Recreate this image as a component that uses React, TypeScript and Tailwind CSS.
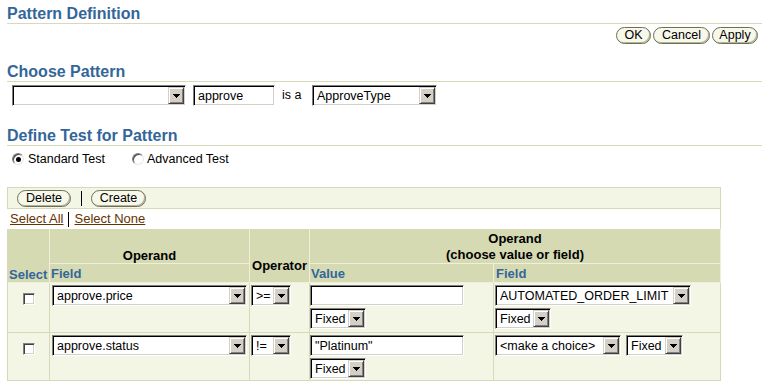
import React from 'react'

const olive = 'border-[#d6dab9]'

function Arrow() {
  return (
    <span className="flex h-[17px] w-[16px] shrink-0 items-center justify-center border border-t-[#d4d0c8] border-l-[#d4d0c8] border-b-[#404040] border-r-[#404040] bg-[#d4d0c8] shadow-[inset_1px_1px_0_#fff,inset_-1px_-1px_0_#808080]">
      <svg width="7" height="4" viewBox="0 0 7 4" shapeRendering="crispEdges">
        <path d="M0 0h7v1H6v1H5v1H4v1H3V3H2V2H1V1H0z" fill="#000" />
      </svg>
    </span>
  )
}

function Sel({ text, className = '' }: { text: string; className?: string }) {
  return (
    <div
      className={`flex h-[21px] shrink-0 border border-t-[#808080] border-l-[#808080] border-b-white border-r-white bg-white p-[1px] shadow-[inset_1px_1px_0_#000,inset_-1px_-1px_0_#d4d0c8] ${className}`}
    >
      <span className="min-w-0 flex-1 overflow-hidden whitespace-nowrap pl-[3px] pt-[1px] text-[12.5px] leading-[16px] text-black">
        {text}
      </span>
      <Arrow />
    </div>
  )
}

function Field({ text, className = '' }: { text: string; className?: string }) {
  return (
    <div
      className={`h-[21px] shrink-0 overflow-hidden whitespace-nowrap border border-t-[#808080] border-l-[#808080] border-b-white border-r-white bg-white pl-[4px] pt-[2px] text-[12.5px] leading-[16px] text-black shadow-[inset_1px_1px_0_#000,inset_-1px_-1px_0_#d4d0c8] ${className}`}
    >
      {text}
    </div>
  )
}

function Pill({ children, className = '' }: { children: React.ReactNode; className?: string }) {
  return (
    <span
      className={`inline-flex h-[17px] items-center justify-center rounded-full border border-[#6e6e58] bg-[#f7f7ea] text-[12.5px] leading-none text-black shadow-[inset_-1px_-1px_0_#b4b49a] ${className}`}
    >
      {children}
    </span>
  )
}

function Radio({ checked }: { checked?: boolean }) {
  return (
    <span className="flex h-[12px] w-[12px] shrink-0 items-center justify-center rounded-full border border-t-[#808080] border-l-[#808080] border-b-[#e8e8e8] border-r-[#e8e8e8] bg-white shadow-[inset_1px_1px_0_#404040]">
      {checked && <span className="h-[5px] w-[5px] rounded-full bg-black" />}
    </span>
  )
}

function Check() {
  return (
    <span className="block h-[12px] w-[12px] border border-t-[#808080] border-l-[#808080] border-b-white border-r-white bg-white shadow-[inset_1px_1px_0_#404040,inset_-1px_-1px_0_#d4d0c8]" />
  )
}

function Title({ children, className = '' }: { children: React.ReactNode; className?: string }) {
  return (
    <div
      className={`ml-[7px] h-[24px] border-b ${olive} pt-[4px] text-[16px] font-bold leading-[19px] text-[#336699] ${className}`}
    >
      {children}
    </div>
  )
}

// header cells: black labels and blue column names
const th = 'bg-[#d5dab2] border-r border-b border-[#eef0dc] text-[13px] font-bold leading-[15px]'
const td = 'bg-[#f3f5e5] border-r border-b border-[#d6dab9]'

export default function App() {
  return (
    <div className="h-[390px] w-[762px] overflow-hidden bg-white font-['Liberation_Sans',Arial,sans-serif] text-black">
      <Title>Pattern Definition</Title>

      <div className="mt-[3px] flex justify-end gap-[2px] pr-[4px]">
        <Pill className="w-[35px]">OK</Pill>
        <Pill className="w-[57px]">Cancel</Pill>
        <Pill className="w-[46px]">Apply</Pill>
      </div>

      <Title className="mt-[14px]">Choose Pattern</Title>

      <div className="mt-[3px] flex items-center pl-[12px]">
        <Sel text="" className="w-[174px]" />
        <Field text="approve" className="ml-[7px] w-[82px]" />
        <span className="ml-[7px] w-[30px] text-[12.5px]">is a</span>
        <Sel text="ApproveType" className="w-[125px]" />
      </div>

      <Title className="mt-[16px]">Define Test for Pattern</Title>

      <div className="mt-[5px] flex h-[16px] items-center pl-[12px] text-[12.5px] leading-[16px]">
        <div className="flex w-[120px] items-center gap-[4px]">
          <Radio checked />
          <span>Standard Test</span>
        </div>
        <div className="flex items-center gap-[3px]">
          <Radio />
          <span>Advanced Test</span>
        </div>
      </div>

      <div className="ml-[7px] mt-[20px] w-[714px]">
        {/* action bar */}
        <div className={`flex h-[22px] items-center border ${olive} bg-[#f3f5e5] pl-[9px]`}>
          <Pill className="w-[54px]">Delete</Pill>
          <span className="ml-[10px] h-[15px] w-px bg-black" />
          <Pill className="ml-[9px] w-[55px]">Create</Pill>
        </div>

        <div className={`flex h-[20px] items-center border-r ${olive} pl-[3px] text-[13px] leading-[16px] text-[#663300]`}>
          <span className="underline">Select All</span>
          <span className="mx-[5px] h-[15px] w-px bg-black" />
          <span className="underline">Select None</span>
        </div>

        <div className={`grid grid-cols-[42px_200px_60px_184px_227px] grid-rows-[35px_19px_50px_48px] border-l ${olive}`}>
          <div className={`${th} col-start-1 row-span-2 row-start-1 flex flex-col justify-end pl-[1px] text-[#336699]`}>Select</div>
          <div className={`${th} col-start-2 row-start-1 flex flex-col items-center justify-end text-black`}>Operand</div>
          <div className={`${th} col-start-3 row-span-2 row-start-1 flex flex-col items-center justify-end pb-[9px] text-black`}>Operator</div>
          <div className={`${th} col-span-2 col-start-4 row-start-1 flex flex-col items-center justify-end leading-[16px] text-black`}>
            <span>Operand</span>
            <span>(choose value or field)</span>
          </div>
          <div className={`${th} col-start-2 row-start-2 pl-[1px] pt-[2px] text-[#336699]`}>Field</div>
          <div className={`${th} col-start-4 row-start-2 pl-[1px] pt-[2px] text-[#336699]`}>Value</div>
          <div className={`${th} col-start-5 row-start-2 pl-[2px] pt-[2px] text-[#336699]`}>Field</div>

          {/* row 1 */}
          <div className={`${td} flex justify-center pt-[10px]`}><Check /></div>
          <div className={`${td} pl-[2px] pt-[2px]`}><Sel text="approve.price" className="w-[195px]" /></div>
          <div className={`${td} pl-[1px] pt-[2px]`}><Sel text=">=" className="w-[40px]" /></div>
          <div className={`${td} flex flex-col gap-[2px] pt-[2px]`}>
            <Field text="" className="w-[154px]" />
            <Sel text="Fixed" className="w-[56px]" />
          </div>
          <div className={`${td} flex flex-col gap-[2px] pl-[1px] pt-[2px]`}>
            <Sel text="AUTOMATED_ORDER_LIMIT" className="w-[196px]" />
            <Sel text="Fixed" className="w-[56px]" />
          </div>

          {/* row 2 */}
          <div className={`${td} flex justify-center pt-[10px]`}><Check /></div>
          <div className={`${td} pl-[2px] pt-[2px]`}><Sel text="approve.status" className="w-[195px]" /></div>
          <div className={`${td} pl-[1px] pt-[2px]`}><Sel text="!=" className="w-[40px]" /></div>
          <div className={`${td} flex flex-col gap-[2px] pt-[2px]`}>
            <Field text={'"Platinum"'} className="w-[154px]" />
            <Sel text="Fixed" className="w-[56px]" />
          </div>
          <div className={`${td} flex items-start gap-[5px] pl-[1px] pt-[2px]`}>
            <Sel text="<make a choice>" className="w-[126px]" />
            <Sel text="Fixed" className="w-[57px]" />
          </div>
        </div>
      </div>
    </div>
  )
}
